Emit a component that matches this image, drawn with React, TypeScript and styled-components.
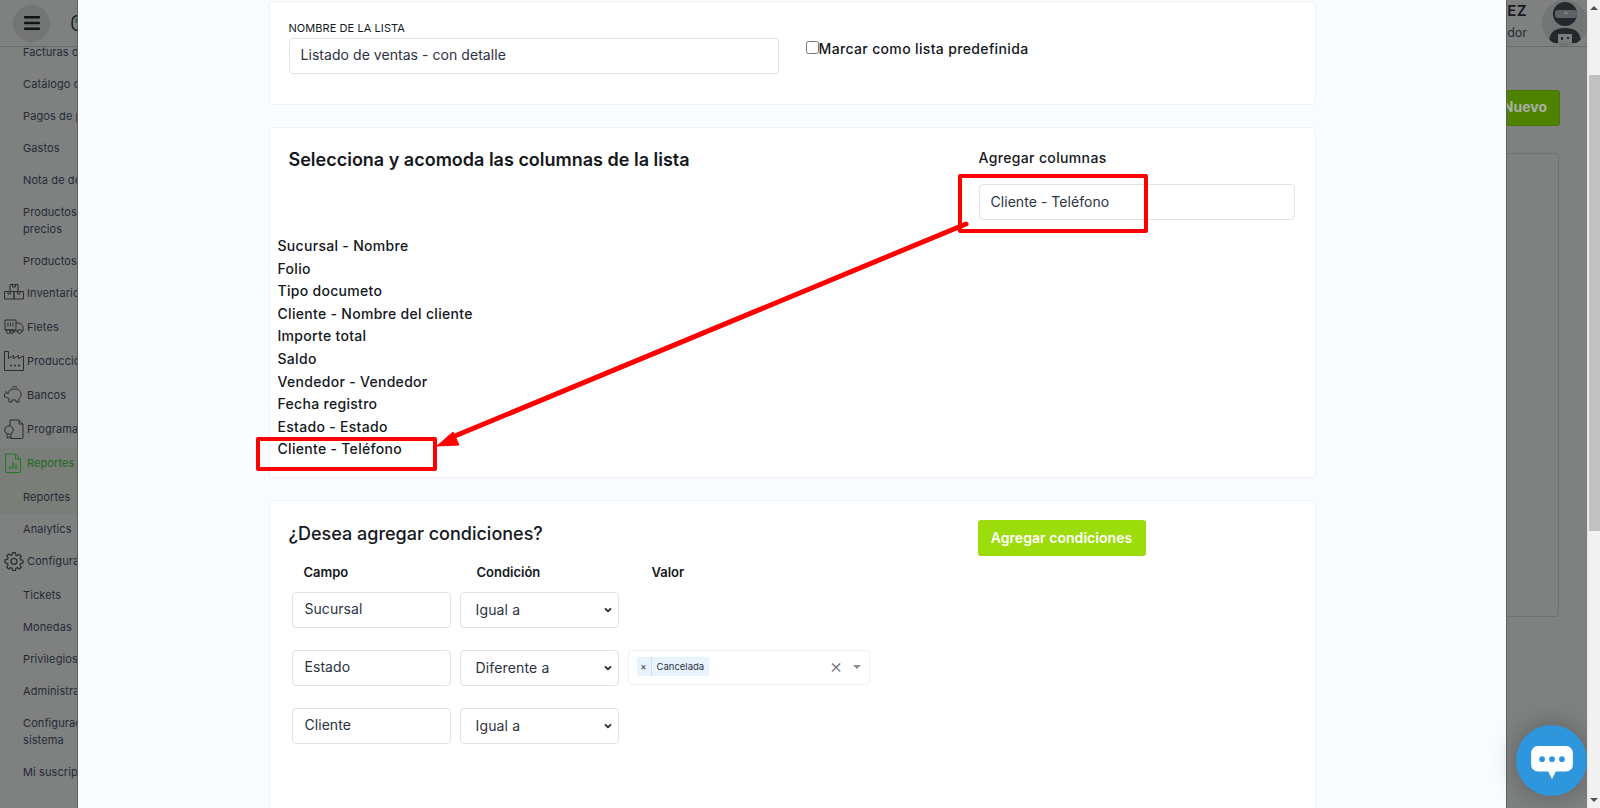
import styled, { createGlobalStyle } from "styled-components";

const FONT = `Inter, "Noto Sans", sans-serif`;

const CHEVRON = `url("data:image/svg+xml,%3Csvg xmlns='http://www.w3.org/2000/svg' width='8' height='6' viewBox='0 0 8 6'%3E%3Cpath d='M1 1.300l3 3 3-3' fill='none' stroke='%23222' stroke-width='1.700'/%3E%3C/svg%3E")`;

const GlobalStyle = createGlobalStyle`
    html, body {
        margin: 0;
        padding: 0;
        height: 100%;
        overflow: hidden;
        font-family: ${FONT};
    }
    * {
        box-sizing: border-box;
    }
`;

const Screen = styled.div`
    display: flex;
    width: 1600px;
    height: 808px;
    overflow: hidden;
`;

const Viewport = styled.div`
    position: relative;
    flex: 1;
    display: flex;
    flex-direction: column;
    overflow: hidden;
    background: #7f8080;
`;

/* page behind the modal, painted in its dimmed colours */
const Header = styled.header`
    position: relative;
    z-index: 1;
    flex: 0 0 45px;
    display: flex;
    align-items: center;
    justify-content: space-between;
    background: #7f8080;
    border-bottom: 1px solid #696a6a;
`;

const HeaderLeft = styled.div`
    display: flex;
    align-items: center;
    gap: 21px;
    padding-left: 13px;
`;

const MenuButton = styled.div`
    width: 37px;
    height: 37px;
    border-radius: 50%;
    background: #737474;
    display: flex;
    align-items: center;
    justify-content: center;
`;

const UserBox = styled.div`
    display: flex;
    align-items: center;
    gap: 15px;
    margin-right: -1px;
`;

const UserText = styled.div`
    display: flex;
    flex-direction: column;
    align-items: flex-end;
    gap: 7px;
    margin-top: -3px;
`;

const UserName = styled.span`
    font-size: 15px;
    line-height: 16px;
    font-weight: 600;
    letter-spacing: 0.4px;
    color: #17191c;
`;

const UserRole = styled.span`
    font-size: 12.5px;
    line-height: 14px;
    color: #262d38;
`;

const Avatar = styled.div`
    width: 46px;
    height: 46px;
    border-radius: 50%;
    background: #737474;
    overflow: hidden;
    display: flex;
    align-items: center;
    justify-content: center;
`;

const Body = styled.div`
    flex: 1;
    display: flex;
    min-height: 0;
`;

const Sidebar = styled.nav`
    flex: 0 0 200px;
    display: flex;
    flex-direction: column;
    margin-top: -10px;
`;

const SubItem = styled.div<{ $active?: boolean }>`
    padding: 7px 0 8px 23px;
    font-size: 11px;
    line-height: 17px;
    letter-spacing: 0.1px;
    color: #242b36;
    white-space: pre-line;
    background: ${(p) => (p.$active ? "#7a7d78" : "transparent")};
`;

const GroupItem = styled.div<{ $active?: boolean }>`
    display: flex;
    align-items: center;
    gap: 3px;
    height: 34px;
    padding: 0 0 5px 4px;
    font-size: 11px;
    letter-spacing: 0.1px;
    color: ${(p) => (p.$active ? "#1c6b20" : "#242b36")};
    background: ${(p) => (p.$active ? "#7a7d78" : "transparent")};
    white-space: nowrap;
`;

const Content = styled.main`
    flex: 1;
    display: flex;
    flex-direction: column;
    align-items: flex-end;
    padding: 43px 28px 0 0;
`;

const NewButton = styled.div`
    width: 200px;
    height: 36px;
    margin-right: -1px;
    border-radius: 3px;
    background: #4f8200;
    border: 1px solid #3f7a00;
    color: #a9aeaa;
    font-size: 14px;
    font-weight: 700;
    display: flex;
    align-items: center;
    justify-content: flex-end;
    padding: 0 12px 4px 0;
`;

const BackPanel = styled.div`
    margin-top: 27px;
    width: 400px;
    height: 464px;
    border: 1px solid #707171;
    border-radius: 4px;
`;

/* modal */
const Modal = styled.div`
    position: absolute;
    z-index: 2;
    top: 0;
    bottom: 0;
    left: 77px;
    width: 1430px;
    background: #f8fcff;
    border-left: 1px solid #5e5f5f;
    border-right: 1px solid #5e5f5f;
    display: flex;
    flex-direction: column;
    align-items: center;
    gap: 22px;
    padding-top: 1px;
    overflow: hidden;
`;

const Card = styled.section`
    flex: none;
    width: 1047px;
    background: #ffffff;
    border: 1px solid #edf2f8;
    border-radius: 4px;
    color: #14171c;
`;

const NameCard = styled(Card)`
    height: 104px;
    display: flex;
    padding: 19px 0 0 19px;
`;

const NameField = styled.div`
    width: 490px;
    display: flex;
    flex-direction: column;
`;

const SmallLabel = styled.label`
    font-size: 11px;
    line-height: 14px;
    margin-bottom: 3px;
    letter-spacing: 0.07px;
    color: #14171c;
`;

const TextInput = styled.input`
    display: block;
    width: 100%;
    height: 36px;
    padding: 0 11px 4px;
    border: 1px solid #dfe2e8;
    border-radius: 4px;
    background: #ffffff;
    font-family: ${FONT};
    font-size: 14px;
    letter-spacing: 0.05px;
    color: #2b3242;
    outline: none;
`;

const PickedColumnInput = styled(TextInput)`
    padding-bottom: 2px;
`;

const FieldInput = styled(TextInput)`
    padding-left: 12px;
`;

const CheckLabel = styled.label`
    display: flex;
    align-items: flex-start;
    margin: 18px 0 0 25px;
    font-size: 14px;
    line-height: 20px;
    font-weight: 500;
    letter-spacing: 0.35px;
`;

const Check = styled.input`
    width: 13px;
    height: 13px;
    margin: 2px 0 0 2px;
`;

const ColumnsCard = styled(Card)`
    height: 351px;
    padding: 0 20px 0 8px;
`;

const ColumnsTop = styled.div`
    display: flex;
    justify-content: space-between;
    padding: 20px 0 0 11px;
`;

const CardTitle = styled.h2`
    margin: 0;
    font-size: 18px;
    line-height: 24px;
    font-weight: 600;
`;

const AddColumns = styled.div`
    width: 316px;
    display: flex;
    flex-direction: column;
    gap: 17px;
    padding-top: 1px;
`;

const AddLabel = styled.span`
    font-size: 14px;
    line-height: 18px;
    font-weight: 500;
    letter-spacing: 0.35px;
`;

const ColumnList = styled.ul`
    list-style: none;
    margin: 15px 0 0;
    padding: 0;
`;

const ColumnItem = styled.li`
    font-size: 14px;
    line-height: 22.6px;
    font-weight: 500;
    letter-spacing: 0.3px;
`;

const ConditionsCard = styled(Card)`
    height: 400px;
    padding: 19px 20px 0 22px;
`;

const ConditionsTop = styled.div`
    display: flex;
    justify-content: space-between;
    align-items: flex-start;
`;

const ConditionsTitle = styled(CardTitle)`
    margin: 2px 0 0 -3px;
    font-weight: 500;
`;

const AddButton = styled.div`
    width: 168px;
    height: 36px;
    margin-right: 149px;
    padding-bottom: 2px;
    border-radius: 3px;
    background: #9bdc0a;
    color: #ffffff;
    font-size: 14px;
    font-weight: 600;
    letter-spacing: 0.05px;
    display: flex;
    align-items: center;
    justify-content: center;
`;

const ConditionGrid = styled.div`
    display: grid;
    grid-template-columns: 159px 159px 242px;
    column-gap: 9px;
    row-gap: 22px;
    margin-top: 7px;
`;

const HeadCell = styled.span<{ $indent: number }>`
    padding-left: ${(p) => p.$indent}px;
    font-size: 13px;
    line-height: 18px;
    font-weight: 600;
    margin-bottom: -11px;
`;

const SelectInput = styled.select`
    width: 100%;
    height: 36px;
    padding: 0 6px 2px 15px;
    border: 1px solid #dfe2e8;
    border-radius: 4px;
    appearance: none;
    background: #ffffff ${CHEVRON} no-repeat right 6px center;
    font-family: ${FONT};
    font-size: 14px;
    letter-spacing: 0.15px;
    color: #2b3242;
    outline: none;
`;

const MultiSelect = styled.div`
    height: 35px;
    display: flex;
    align-items: center;
    padding: 0 8px 2px;
    border: 1px solid #edf0f5;
    border-radius: 4px;
`;

const Tag = styled.div`
    display: flex;
    align-items: stretch;
    height: 19px;
    background: #e9f3fd;
    border-radius: 2px;
    font-size: 9.5px;
    line-height: 19px;
    color: #2b3242;
`;

const TagRemove = styled.span`
    width: 15px;
    text-align: center;
    border-right: 1px solid #c9dff2;
`;

const TagText = styled.span`
    padding: 0 5px;
`;

const MultiIcons = styled.div`
    margin-left: auto;
    display: flex;
    align-items: center;
    gap: 10px;
`;

const ClearGlyph = styled.span`
    font-size: 20px;
    line-height: 15px;
    font-weight: 300;
    color: #70757c;
`;

const Caret = styled.span`
    width: 0;
    height: 0;
    border-left: 4px solid transparent;
    border-right: 4px solid transparent;
    border-top: 4px solid #8a8f95;
`;

/* annotations drawn on top of the screenshot */
const ColumnsMarker = styled.div`
    position: absolute;
    z-index: 3;
    left: 958px;
    top: 174px;
    width: 190px;
    height: 59px;
    border: 4px solid #fe0000;
    border-radius: 2px;
`;

const RowMarker = styled.div`
    position: absolute;
    z-index: 3;
    left: 256px;
    top: 437px;
    width: 181px;
    height: 34px;
    border: 4px solid #fe0000;
    border-radius: 2px;
`;

const ArrowLayer = styled.svg`
    position: absolute;
    z-index: 3;
    left: 0;
    top: 0;
    pointer-events: none;
`;

const ChatBubble = styled.div`
    position: absolute;
    z-index: 3;
    right: 0;
    bottom: 12px;
    width: 71px;
    height: 71px;
    padding-top: 5px;
    border-radius: 50%;
    background: #2d96dd;
    box-shadow: 0 0 26px rgba(0, 0, 0, 0.28);
    display: flex;
    align-items: center;
    justify-content: center;
`;

/* window scrollbar */
const ScrollTrack = styled.div`
    flex: 0 0 13px;
    display: flex;
    flex-direction: column;
    align-items: flex-end;
    background: #f1f1f1;
    border-left: 1px solid #e6e6e6;
`;

const ScrollArrow = styled.span<{ $down?: boolean }>`
    align-self: center;
    width: 0;
    height: 0;
    margin-top: ${(p) => (p.$down ? "auto" : "6px")};
    margin-bottom: ${(p) => (p.$down ? "6px" : "0")};
    border-left: 4px solid transparent;
    border-right: 4px solid transparent;
    border-${(p) => (p.$down ? "top" : "bottom")}: 4px solid #505050;
`;

const ScrollThumb = styled.div`
    width: 11px;
    height: 456px;
    margin-top: 65px;
    background: #c1c1c1;
`;

const LineIcon = ({ color = "#2a2d31", children }: { color?: string; children: React.ReactNode }) => (
    <svg width="20" height="20" viewBox="0 0 20 20" fill="none" stroke={color} strokeWidth="1" strokeLinejoin="round" style={{ flex: "none" }}>
        {children}
    </svg>
);

const InventoryIcon = () => (
    <LineIcon>
        <path d="M6 1.500h8v7H6zM8.500 1.500v2.500h3V1.500M0.500 8.500h9.500v7.500H0.500zM10 8.500h9.500v7.500H10zM4 8.500v2.500h2.500V8.500M13.500 8.500v2.500h2.500V8.500" />
    </LineIcon>
);

const TruckIcon = () => (
    <LineIcon>
        <path d="M1 3h11v10H1zM4 5.500v4M6.500 5.500v4M9 5.500v4M12 6h4l3 3.500V14h-2M1 13h1.500M7 14h8" />
        <circle cx="4.500" cy="14.500" r="2" />
        <circle cx="8" cy="14.500" r="2" />
        <circle cx="15.500" cy="14.500" r="2" />
    </LineIcon>
);

const FactoryIcon = () => (
    <LineIcon>
        <path d="M0.500 0.500h4v7l5-3v3l5-3v3l5-2.500V19.500H0.500z" />
        <path d="M6 14.500h2M10 14.500h2M14 14.500h2" strokeWidth="1.600" />
    </LineIcon>
);

const PiggyIcon = () => (
    <LineIcon>
        <path d="M4 9c0-3 3-5 7-5s6 2.500 6 5.500c0 2-1 3-2 4v3.500h-3v-2H8v2H5v-3.500c-1 0-2-1-3-1.500H0.500v-3l2-1.500L2 6.500z" />
        <path d="M8 3c0-2 5-2 5 0" />
    </LineIcon>
);

const CertificateIcon = () => (
    <LineIcon>
        <path d="M6 6.500V1h9l4 4v13.500a1 1 0 0 1-1 1H6.500" />
        <path d="M15 1v4h4" />
        <circle cx="5" cy="11" r="4.200" />
        <path d="M3 15v4l2-1 2 1v-4" />
    </LineIcon>
);

const ReportIcon = () => (
    <LineIcon color="#1c7d22">
        <path d="M1.500 1h10l5 5v12.500a1 1 0 0 1-1 1h-13a1 1 0 0 1-1-1z" />
        <path d="M11.500 1v5h5" />
        <path d="M6 16v-3M9 16V9.500M12 16v-4.500" strokeWidth="1.400" />
    </LineIcon>
);

const GearIcon = () => (
    <svg width="20" height="20" viewBox="0 0 24 24" fill="none" stroke="#2a2d31" strokeWidth="1.500" strokeLinejoin="round" style={{ flex: "none" }}>
        <path d="M10.300 2h3.400l.5 2.900 1.800.8 2.400-1.700 2.400 2.400-1.700 2.400.8 1.800 2.900.5v3.400l-2.900.5-.8 1.800 1.700 2.400-2.400 2.400-2.400-1.700-1.800.8-.5 2.900h-3.400l-.5-2.900-1.800-.8-2.400 1.700-2.400-2.400 1.700-2.400-.8-1.800L1.200 14v-3.400l2.900-.5.8-1.800-1.700-2.400 2.400-2.400 2.400 1.700 1.800-.8z" />
        <circle cx="12" cy="12.300" r="3.600" />
    </svg>
);

const subTop = ["Facturas de proveedor", "Catálogo de gastos", "Pagos de proveedores", "Gastos", "Nota de débito", "Productos y lista de\nprecios", "Productos"];
const subBottom = ["Tickets", "Monedas", "Privilegios", "Administrador de usuarios", "Configuración del\nsistema", "Mi suscripción"];
const columns = ["Sucursal - Nombre", "Folio", "Tipo documeto", "Cliente - Nombre del cliente", "Importe total", "Saldo", "Vendedor - Vendedor", "Fecha registro", "Estado - Estado", "Cliente - Teléfono"];

const App = () => {
    return (
        <Screen>
            <GlobalStyle />
            <Viewport>
                <Header>
                    <HeaderLeft>
                        <MenuButton>
                            <svg width="18" height="16" viewBox="0 0 18 16" fill="#101214">
                                <rect x="1" y="1" width="16" height="2.600" rx="1" />
                                <rect x="1" y="6.700" width="16" height="2.600" rx="1" />
                                <rect x="1" y="12.400" width="16" height="2.600" rx="1" />
                            </svg>
                        </MenuButton>
                        <svg width="14" height="18" viewBox="0 0 14 18" fill="none" strokeWidth="1.500">
                            <path d="M7 1.500C3 1.500 1 4 1 9s2 7.500 6 7.500" stroke="#1a1c1e" />
                            <path d="M7 4C5.500 4.500 5 6 5 9" stroke="#1c6b20" />
                        </svg>
                    </HeaderLeft>
                    <UserBox>
                        <UserText>
                            <UserName>EZ</UserName>
                            <UserRole>dor</UserRole>
                        </UserText>
                        <Avatar>
                            <svg width="40" height="42" viewBox="0 0 40 42">
                                <circle cx="20" cy="12" r="12" fill="#24272b" />
                                <rect x="10" y="8" width="22" height="8" rx="3" fill="#5f6265" />
                                <path d="M19 11h4M21 9.500v3" stroke="#8a8c8e" strokeWidth="1" />
                                <path d="M4 41c0-10 5-15 16-15s16 5 16 15z" fill="#24272b" />
                                <rect x="13" y="32" width="14" height="9" rx="1" fill="#7a7c7e" />
                                <rect x="16" y="35" width="2" height="3" fill="#24272b" />
                                <rect x="22" y="35" width="2" height="2" fill="#24272b" />
                            </svg>
                        </Avatar>
                    </UserBox>
                </Header>
                <Body>
                    <Sidebar>
                        {subTop.map((item) => (
                            <SubItem key={item}>{item}</SubItem>
                        ))}
                        <GroupItem><InventoryIcon />Inventario</GroupItem>
                        <GroupItem><TruckIcon />Fletes</GroupItem>
                        <GroupItem><FactoryIcon />Producción</GroupItem>
                        <GroupItem><PiggyIcon />Bancos</GroupItem>
                        <GroupItem><CertificateIcon />Programa</GroupItem>
                        <GroupItem $active><ReportIcon />Reportes</GroupItem>
                        <SubItem $active>Reportes</SubItem>
                        <SubItem>Analytics</SubItem>
                        <GroupItem><GearIcon />Configuración</GroupItem>
                        {subBottom.map((item) => (
                            <SubItem key={item}>{item}</SubItem>
                        ))}
                    </Sidebar>
                    <Content>
                        <NewButton>Nuevo</NewButton>
                        <BackPanel />
                    </Content>
                </Body>

                <Modal>
                    <NameCard>
                        <NameField>
                            <SmallLabel>NOMBRE DE LA LISTA</SmallLabel>
                            <TextInput readOnly value="Listado de ventas - con detalle" />
                        </NameField>
                        <CheckLabel>
                            <Check type="checkbox" readOnly />
                            Marcar como lista predefinida
                        </CheckLabel>
                    </NameCard>

                    <ColumnsCard>
                        <ColumnsTop>
                            <CardTitle>Selecciona y acomoda las columnas de la lista</CardTitle>
                            <AddColumns>
                                <AddLabel>Agregar columnas</AddLabel>
                                <PickedColumnInput readOnly value="Cliente - Teléfono" />
                            </AddColumns>
                        </ColumnsTop>
                        <ColumnList>
                            {columns.map((column) => (
                                <ColumnItem key={column}>{column}</ColumnItem>
                            ))}
                        </ColumnList>
                    </ColumnsCard>

                    <ConditionsCard>
                        <ConditionsTop>
                            <ConditionsTitle>¿Desea agregar condiciones?</ConditionsTitle>
                            <AddButton>Agregar condiciones</AddButton>
                        </ConditionsTop>
                        <ConditionGrid>
                            <HeadCell $indent={12}>Campo</HeadCell>
                            <HeadCell $indent={17}>Condición</HeadCell>
                            <HeadCell $indent={24}>Valor</HeadCell>

                            <FieldInput readOnly value="Sucursal" />
                            <SelectInput defaultValue="Igual a">
                                <option>Igual a</option>
                                <option>Diferente a</option>
                            </SelectInput>
                            <span />

                            <FieldInput readOnly value="Estado" />
                            <SelectInput defaultValue="Diferente a">
                                <option>Igual a</option>
                                <option>Diferente a</option>
                            </SelectInput>
                            <MultiSelect>
                                <Tag>
                                    <TagRemove>×</TagRemove>
                                    <TagText>Cancelada</TagText>
                                </Tag>
                                <MultiIcons>
                                    <ClearGlyph>×</ClearGlyph>
                                    <Caret />
                                </MultiIcons>
                            </MultiSelect>

                            <FieldInput readOnly value="Cliente" />
                            <SelectInput defaultValue="Igual a">
                                <option>Igual a</option>
                                <option>Diferente a</option>
                            </SelectInput>
                            <span />
                        </ConditionGrid>
                    </ConditionsCard>
                </Modal>

                <ColumnsMarker />
                <RowMarker />
                <ArrowLayer width="1587" height="808" viewBox="0 0 1587 808">
                    <path d="M966 224L450 438" stroke="#fe0000" strokeWidth="5" strokeLinecap="round" fill="none" />
                    <path d="M437 446L453 432L459 445z" fill="#fe0000" stroke="#fe0000" strokeWidth="1" />
                </ArrowLayer>

                <ChatBubble>
                    <svg width="44" height="36" viewBox="0 0 46 38">
                        <path d="M8 1h30a7 7 0 0 1 7 7v13a7 7 0 0 1-7 7H27l-4 8-4-8H8a7 7 0 0 1-7-7V8a7 7 0 0 1 7-7z" fill="#ffffff" />
                        <circle cx="12.500" cy="15" r="3" fill="#2d96dd" />
                        <circle cx="23" cy="15" r="3" fill="#2d96dd" />
                        <circle cx="33.500" cy="15" r="3" fill="#2d96dd" />
                    </svg>
                </ChatBubble>
            </Viewport>
            <ScrollTrack>
                <ScrollArrow />
                <ScrollThumb />
                <ScrollArrow $down />
            </ScrollTrack>
        </Screen>
    );
};

export default App;
